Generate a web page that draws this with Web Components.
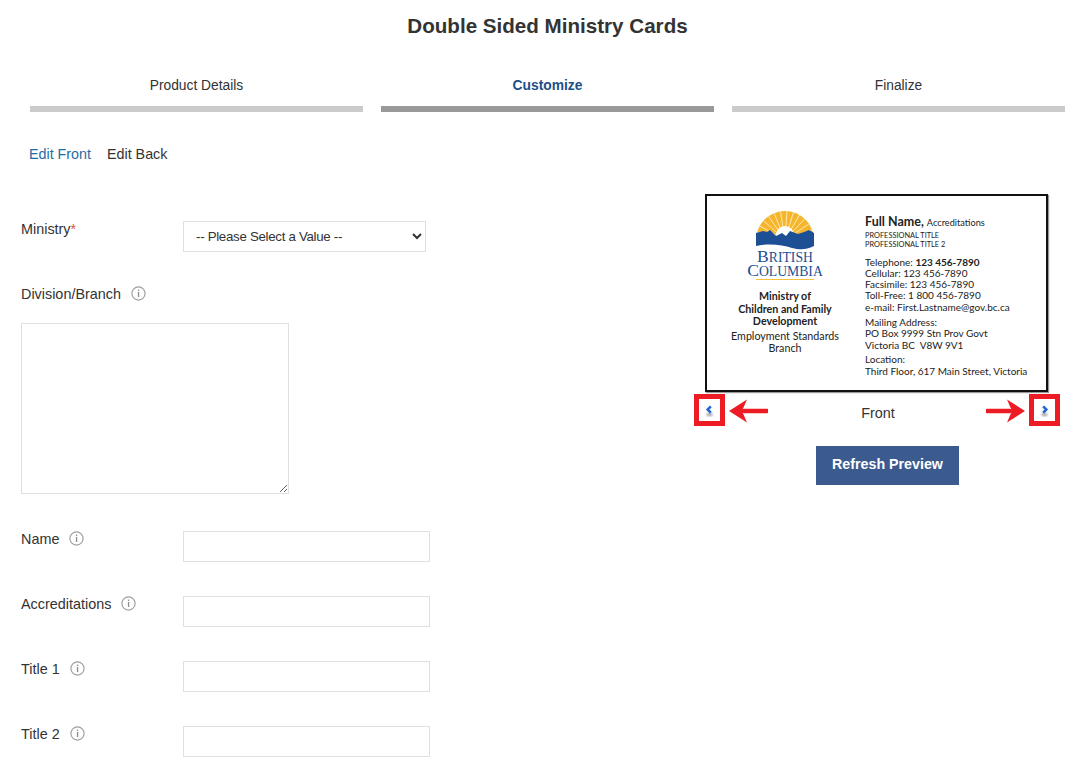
<!doctype html>
<html>
<head>
<meta charset="utf-8">
<title>Double Sided Ministry Cards</title>
<style>
  html, body { margin: 0; background: #fff; overflow: hidden; }
  body { font-family: "Liberation Sans", Arial, sans-serif; font-size: 14px; color: #333; }
</style>
</head>
<body>
<order-page>
  <step-item slot="steps">Product Details</step-item>
  <step-item slot="steps" active>Customize</step-item>
  <step-item slot="steps">Finalize</step-item>

  <form-row slot="form" label="Ministry" required field="select"></form-row>
  <form-row slot="form" label="Division/Branch" info field="textarea"></form-row>
  <form-row slot="form" label="Name" info></form-row>
  <form-row slot="form" label="Accreditations" info></form-row>
  <form-row slot="form" label="Title 1" info></form-row>
  <form-row slot="form" label="Title 2" info></form-row>

  <card-preview slot="preview"></card-preview>
</order-page>

<script>
class StepItem extends HTMLElement {
  constructor() {
    super();
    this.attachShadow({ mode: "open" }).innerHTML = `
      <style>
        :host { display: block; flex: 1; text-align: center; color: #333; font-size: 13.8px; }
        :host([active]) { color: #1b4f8a; font-weight: bold; }
        .label { height: 29px; line-height: 16px; padding-top: 1px; box-sizing: border-box; }
        .bar { height: 6px; background: #cbcbcb; }
        :host([active]) .bar { background: #999; }
      </style>
      <div class="label"><slot></slot></div>
      <div class="bar"></div>`;
  }
}
customElements.define("step-item", StepItem);

class InfoIcon extends HTMLElement {
  constructor() {
    super();
    this.attachShadow({ mode: "open" }).innerHTML = `
      <style>
        :host { display: inline-block; width: 15px; height: 15px; }
        svg { display: block; }
      </style>
      <svg width="15" height="15" viewBox="0 0 15 15" fill="none">
        <circle cx="7.5" cy="7.5" r="6.6" stroke="#a0a0a0" stroke-width="1.2"/>
        <rect x="6.9" y="3.6" width="1.3" height="1.4" fill="#8c8c8c"/>
        <rect x="6.9" y="6" width="1.3" height="5" fill="#8c8c8c"/>
      </svg>`;
  }
}
customElements.define("info-icon", InfoIcon);

class FormRow extends HTMLElement {
  connectedCallback() {
    const field = this.getAttribute("field") || "input";
    const star = this.hasAttribute("required") ? '<span class="req">*</span>' : "";
    const info = this.hasAttribute("info") ? "<info-icon></info-icon>" : "";
    const controls = {
      input: '<input type="text">',
      select: "<select><option>-- Please Select a Value --</option></select>",
      textarea: "<textarea></textarea>",
    };
    this.attachShadow({ mode: "open" }).innerHTML = `
      <style>
        :host { display: flex; margin-bottom: 34px; }
        :host([field="textarea"]) { display: block; margin-bottom: 37px; }
        .label { width: 162px; flex: none; display: flex; align-items: flex-start; gap: 10px; line-height: 16px; color: #333; font-size: 14.4px; }
        :host([field="textarea"]) .label { width: auto; height: 37px; }
        .req { color: #e0524f; }
        input, select, textarea {
          box-sizing: border-box; display: block; margin: 0; background: #fff;
          border: 1px solid #e0e0e0; border-radius: 0; outline: 0;
          font: 14px "Liberation Sans", Arial, sans-serif; color: #333;
        }
        input { width: 247px; height: 31px; }
        select { width: 243px; height: 31px; padding: 0 8px; font-size: 13.3px; letter-spacing: -0.3px; }
        textarea { width: 268px; height: 171px; }
      </style>
      <div class="label"><span>${this.getAttribute("label")}${star}</span>${info}</div>
      ${controls[field]}`;
  }
}
customElements.define("form-row", FormRow);

class BcLogo extends HTMLElement {
  constructor() {
    super();
    let rays = "";
    for (let a = 8; a < 180; a += 13) {
      const r = a * Math.PI / 180;
      const x = 29 + 29 * Math.cos(r), y = 30 - 29 * Math.sin(r);
      rays += `<line x1="29" y1="30" x2="${x.toFixed(1)}" y2="${y.toFixed(1)}" stroke="#fde9a8" stroke-width="1"/>`;
    }
    this.attachShadow({ mode: "open" }).innerHTML = `
      <style>
        :host { display: block; width: 78px; text-align: center; color: #234f93; font-family: "Liberation Serif", serif; }
        svg { display: block; margin: 0 auto -1px; }
        .word { font-size: 17.6px; line-height: 12px; white-space: nowrap; }
        .word span { font-size: 13.7px; }
        .rule { height: 1px; width: 58px; margin: 1px auto 0; background: #f4c23c; }
      </style>
      <svg width="58" height="41" viewBox="0 0 58 41">
        <path d="M0 30A29 29 0 0 1 58 30V34H0Z" fill="#f6b52e"/>
        ${rays}
        <circle cx="29" cy="25" r="9" fill="#fff"/>
        <path d="M0 23L7 21L11 22L14 20L20 26L26 23L30 26L34 21L42 24L48 22L53 20L58 23V36
                 C50 40 44 40 36 38C26 35 14 33 0 36Z" fill="#1c4f94"/>
      </svg>
      <div class="word">B<span>RITISH</span></div>
      <div class="word">C<span>OLUMBIA</span></div>
      <div class="rule"></div>`;
  }
}
customElements.define("bc-logo", BcLogo);

class BusinessCard extends HTMLElement {
  constructor() {
    super();
    this.attachShadow({ mode: "open" }).innerHTML = `
      <style>
        :host {
          display: flex; box-sizing: border-box; width: 343px; height: 198px;
          border: 2px solid #111; box-shadow: 1px 1px 1px #999; background: #fff;
          font-family: Lato, "Open Sans", sans-serif; font-size: 10px; line-height: 11.2px; color: #222;
        }
        .left { width: 156px; flex: none; padding-top: 14px; display: flex; flex-direction: column; align-items: center; text-align: center; font-size: 10.7px; }
        .org { margin-top: 10px; font-weight: bold; line-height: 12.6px; }
        .unit { margin-top: 2px; line-height: 12.4px; }
        .right { padding: 19px 0 0 2px; white-space: nowrap; }
        .name { font-size: 12.5px; font-weight: bold; line-height: 14px; }
        .name small { font-size: 9.2px; font-weight: normal; }
        .caps { font-size: 7.4px; line-height: 8.6px; margin-top: 2px; }
        .block { margin-top: 4.5px; }
        .block.first { margin-top: 7.5px; }
        .block.last { margin-top: 3.5px; }
      </style>
      <div class="left">
        <bc-logo></bc-logo>
        <div class="org">Ministry of<br>Children and Family<br>Development</div>
        <div class="unit">Employment Standards<br>Branch</div>
      </div>
      <div class="right">
        <div class="name">Full Name, <small>Accreditations</small></div>
        <div class="caps">PROFESSIONAL TITLE<br>PROFESSIONAL TITLE 2</div>
        <div class="block first">Telephone: <b>123 456-7890</b><br>Cellular: 123 456-7890<br>Facsimile: 123 456-7890<br>Toll-Free: 1 800 456-7890<br>e-mail: First.Lastname@gov.bc.ca</div>
        <div class="block">Mailing Address:<br>PO Box 9999 Stn Prov Govt<br>Victoria BC&nbsp; V8W 9V1</div>
        <div class="block last">Location:<br>Third Floor, 617 Main Street, Victoria</div>
      </div>`;
  }
}
customElements.define("business-card", BusinessCard);

class PagerMark extends HTMLElement {
  constructor() {
    super();
    const next = this.getAttribute("dir") === "next";
    const chevron = next ? "M11 8L14.5 11.5L11 15" : "M14 8L10.5 11.5L14 15";
    const arrow = next
      ? '<path d="M1 14H24" stroke="#ed1c24" stroke-width="4.5" stroke-linecap="round"/><path d="M39 14L21 2.5L26 14L21 25.5Z" fill="#ed1c24"/>'
      : '<path d="M39 14H16" stroke="#ed1c24" stroke-width="4.5" stroke-linecap="round"/><path d="M1 14L19 2.5L14 14L19 25.5Z" fill="#ed1c24"/>';
    const box = `<div class="box"><svg width="21" height="22" viewBox="1 0 23 24" fill="none">
        <defs><filter id="b"><feGaussianBlur stdDeviation="1"/></filter></defs>
        <ellipse cx="12.5" cy="17" rx="3.5" ry="2" fill="#aaa" filter="url(#b)"/>
        <path d="${chevron}" stroke="#2266d4" stroke-width="2.8"/></svg></div>`;
    const tail = `<svg class="arrow" width="40" height="28" viewBox="0 0 40 28">${arrow}</svg>`;
    this.attachShadow({ mode: "open" }).innerHTML = `
      <style>
        :host { display: flex; align-items: center; gap: 3px; }
        .box { box-sizing: border-box; width: 31px; height: 32px; border: 5px solid #ed1c24; display: flex; align-items: center; justify-content: center; }
        svg { display: block; }
        .arrow { margin-top: 2px; }
      </style>
      ${next ? tail + box : box + tail}`;
  }
}
customElements.define("pager-mark", PagerMark);

class CardPreview extends HTMLElement {
  constructor() {
    super();
    this.attachShadow({ mode: "open" }).innerHTML = `
      <style>
        :host { display: block; width: 366px; }
        business-card { margin-left: 11px; }
        .pager { display: flex; justify-content: space-between; align-items: center; margin-top: 2px; height: 32px; }
        .side { color: #333; font-size: 14.4px; padding: 6px 0 0 2px; }
        button {
          display: block; box-sizing: border-box; width: 143px; height: 39px; margin: 20px 0 0 122px;
          border: 0; background: #3b5b8f; color: #fff; padding: 0 0 3px;
          font: bold 14.25px "Liberation Sans", Arial, sans-serif;
        }
      </style>
      <business-card></business-card>
      <div class="pager">
        <pager-mark dir="prev"></pager-mark>
        <span class="side">Front</span>
        <pager-mark dir="next"></pager-mark>
      </div>
      <button>Refresh Preview</button>`;
  }
}
customElements.define("card-preview", CardPreview);

class OrderPage extends HTMLElement {
  constructor() {
    super();
    this.attachShadow({ mode: "open" }).innerHTML = `
      <style>
        :host { display: block; height: 770px; overflow: hidden; }
        h1 { width: 1095px; margin: 0; padding-top: 14px; text-align: center; font-size: 20.6px; line-height: 24px; color: #333; }
        .steps { display: flex; gap: 18px; width: 1035px; margin: 39px 0 0 30px; }
        .tabs { display: flex; gap: 16px; margin: 34px 0 0 29px; line-height: 16px; font-size: 14.3px; }
        .tabs a { color: #333; }
        .tabs a.on { color: #1f6ea3; }
        .main { display: grid; grid-template-columns: 694px auto; margin-top: 32px; }
        .form { padding: 27px 0 0 21px; }
      </style>
      <h1>Double Sided Ministry Cards</h1>
      <div class="steps"><slot name="steps"></slot></div>
      <div class="tabs"><a class="on">Edit Front</a><a>Edit Back</a></div>
      <div class="main">
        <div class="form"><slot name="form"></slot></div>
        <div><slot name="preview"></slot></div>
      </div>`;
  }
}
customElements.define("order-page", OrderPage);
</script>
</body>
</html>
